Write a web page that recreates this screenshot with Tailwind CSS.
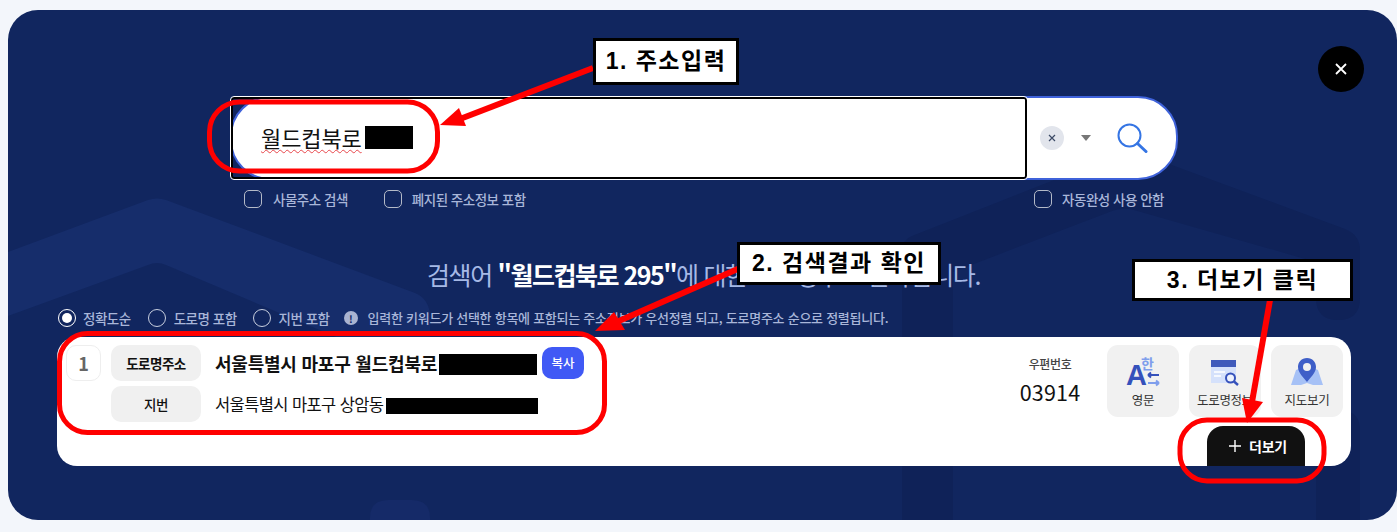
<!DOCTYPE html>
<html lang="ko">
<head>
<meta charset="utf-8">
<script src="https://cdn.jsdelivr.net/npm/@tailwindcss/browser@4"></script>
</head>
<body class="bg-[#f3f6fb] font-['Noto_Sans_CJK_KR',sans-serif]">
<div class="w-[1397px] h-[532px] pt-[10px] pl-[8px] overflow-hidden relative">
  <main class="relative w-[1389px] h-[510px] bg-[#11265f] rounded-[30px] overflow-hidden flex flex-col">
    <svg class="absolute inset-0" width="1389" height="510" viewBox="8 10 1389 510" fill="none">
      <path d="M8 252 L148 200 Q157 197 166 200 L415 293 Q430 299 430 318 V345 H355 L166 265 Q157 261 148 265 L8 316 Z" fill="#162d6b"/>
      <path d="M370 520 V518 Q370 500 388 500 H412 Q430 500 430 518 V520 Z" fill="#152a68"/>
      <path d="M902 520 V250 Q902 240 912 236 L1120 154 Q1131 150 1142 154 L1345 229 Q1360 235 1360 250 V298 Q1360 320 1338 320 Q1316 320 1316 298 V262 L1134 210 Q1123 207 1112 211 L953 272 V520 Z" fill="#0f2258"/>
      <path d="M1316 520 V430 Q1316 410 1338 410 Q1360 410 1360 430 V520 Z" fill="#0f2258"/>
    </svg>

    <button class="absolute left-[1310px] top-[36px] w-[46px] h-[46px] rounded-full bg-black flex items-center justify-center">
      <svg width="14" height="14" viewBox="0 0 14 14" stroke="#fff" stroke-width="1.8"><path d="M2 2L12 12M12 2L2 12"/></svg>
    </button>

    <section class="relative mt-[86px] ml-[222px] w-[948px] h-[84px] bg-white rounded-[40px] border-2 border-[#3f62da] flex items-center shrink-0">
      <div class="absolute -left-[1px] -top-[1px] w-[796px] h-[82px] border-2 border-black rounded-[3px] outline outline-1 outline-white flex items-center pl-[28px] pb-[2px]">
        <span class="text-[22px] leading-[30px] tracking-[-0.1px] text-[#111] underline decoration-wavy decoration-[#e8474c] decoration-1 underline-offset-2">월드컵북로</span>
        <span class="ml-[3px] w-[48px] h-[23px] bg-black"></span>
      </div>
      <div class="ml-[808px] flex items-center">
        <span class="w-[24px] h-[24px] rounded-full bg-[#e2e5ec] flex items-center justify-center">
          <svg width="8" height="8" viewBox="0 0 8 8" stroke="#3b4a66" stroke-width="1.2"><path d="M1 1L7 7M7 1L1 7"/></svg>
        </span>
        <svg class="ml-[17px]" width="10" height="6" viewBox="0 0 10 6" fill="#777"><path d="M0 0H10L5 6Z"/></svg>
        <svg class="ml-[25px]" width="32" height="32" viewBox="0 0 32 32" fill="none" stroke="#3575e4"><circle cx="13.5" cy="13.5" r="11" stroke-width="2"/><path d="M21.5 21.5L30 29.500" stroke-width="3" stroke-linecap="round"/></svg>
      </div>
    </section>

    <div class="relative mt-[9px] ml-[236px] w-[920px] flex items-center text-[13.5px] font-medium tracking-[-0.5px] text-[#a9b6d9] h-[20px] shrink-0">
      <span class="w-[18px] h-[18px] rounded-[5px] border border-[#b4bac8]"></span>
      <span class="ml-[11px]">사물주소 검색</span>
      <span class="ml-[36px] w-[18px] h-[18px] rounded-[5px] border border-[#b4bac8]"></span>
      <span class="ml-[10px]">폐지된 주소정보 포함</span>
      <span class="ml-auto w-[18px] h-[18px] rounded-[5px] border border-[#b4bac8]"></span>
      <span class="ml-[10px]">자동완성 사용 안함</span>
    </div>

    <h2 class="relative mt-[47px] pl-[2px] text-center text-[25px] leading-[36px] tracking-[-1.35px] font-normal text-[#a6b9e6] shrink-0">검색어 <b class="font-bold tracking-[-1.5px] text-white">"월드컵북로 295"</b>에 대한 도로명주소 결과입니다.</h2>

    <div class="relative mt-[16px] ml-[50px] flex items-center h-[20px] text-[13.5px] font-medium tracking-[-0.5px] text-[#a9b6d9] shrink-0">
      <span class="w-[18px] h-[18px] rounded-full border border-white flex items-center justify-center"><span class="w-[10px] h-[10px] rounded-full bg-white"></span></span>
      <span class="ml-[7px]">정확도순</span>
      <span class="ml-[17px] w-[18px] h-[18px] rounded-full border border-[#c8cfdf]"></span>
      <span class="ml-[8px]">도로명 포함</span>
      <span class="ml-[16px] w-[18px] h-[18px] rounded-full border border-[#c8cfdf]"></span>
      <span class="ml-[8px]">지번 포함</span>
      <span class="ml-[14px] w-[14px] h-[14px] rounded-full bg-[#a9b3d1] text-[#11265f] text-[10px] font-bold flex items-center justify-center">!</span>
      <span class="ml-[10px] text-[13px] tracking-[-0.26px]">입력한 키워드가 선택한 항목에 포함되는 주소정보가 우선정렬 되고, 도로명주소 순으로 정렬됩니다.</span>
    </div>

    <article class="relative mt-[9px] ml-[49px] w-[1294px] h-[129px] bg-white rounded-[20px] shrink-0 flex pt-[8px] pl-[9px] pr-[8px]">
      <span class="w-[35px] h-[36px] rounded-[10px] border border-[#eeeeee] flex items-center justify-center text-[18px] font-bold text-[#666]">1</span>
      <div class="ml-[10px] flex flex-col gap-[5px]">
        <div class="flex items-center h-[36px]">
          <span class="w-[90px] h-[36px] rounded-[10px] bg-[#f0f0f0] flex items-center justify-center text-[13.5px] font-bold tracking-[-0.5px] text-[#111]">도로명주소</span>
          <span class="ml-[14px] text-[18px] font-bold tracking-[-0.22px] text-[#111]">서울특별시 마포구 월드컵북로</span>
          <span class="mt-[2px] ml-[2px] w-[98px] h-[21px] bg-black"></span>
          <span class="ml-[5px] w-[42px] h-[32px] rounded-[10px] bg-[#4059f5] text-white text-[12.5px] font-medium flex items-center justify-center">복사</span>
        </div>
        <div class="flex items-center h-[36px]">
          <span class="w-[90px] h-[36px] rounded-[10px] bg-[#f0f0f0] flex items-center justify-center text-[13.5px] font-medium tracking-[-0.4px] text-[#111]">지번</span>
          <span class="ml-[14px] text-[16.5px] tracking-[-0.6px] text-[#111]">서울특별시 마포구 상암동</span>
          <span class="mt-[4px] ml-[3px] w-[152px] h-[16px] bg-black"></span>
        </div>
      </div>
      <div class="ml-auto flex h-[72px]">
        <div class="w-[62px] flex flex-col items-center mr-[26px] pt-[10px]">
          <span class="text-[12px] leading-[18px] font-medium tracking-[-0.4px] text-[#444]">우편번호</span>
          <span class="mt-[5px] text-[21.5px] leading-[28px] text-[#111] tracking-[0.2px]">03914</span>
        </div>
        <div class="flex gap-[10px]">
          <div class="w-[72px] h-[72px] rounded-[11px] bg-[#f1f1f1] flex flex-col items-center pt-[12px]">
            <svg class="overflow-visible" width="34" height="30" viewBox="0 0 34 30">
              <text x="15" y="12" font-size="14" font-weight="700" fill="#7f9eec" font-family="Noto Sans CJK KR">한</text>
              <text x="0" y="28" font-size="29" font-weight="700" fill="#3551bb" font-family="Liberation Sans">A</text>
              <path d="M22 18H33M22 18L25 15.500M22 18L25 20.500" stroke="#3551bb" stroke-width="2" fill="none"/>
              <path d="M22 26H33M33 26L30 23.500M33 26L30 28.500" stroke="#7f9eec" stroke-width="2" fill="none"/>
            </svg>
            <span class="mt-[5px] text-[12.5px] leading-[16px] tracking-[-0.3px] text-[#333]">영문</span>
          </div>
          <div class="w-[72px] h-[72px] rounded-[11px] bg-[#f1f1f1] flex flex-col items-center pt-[12px]">
            <svg width="30" height="30" viewBox="0 0 30 30">
              <rect x="1" y="3" width="25" height="23" fill="#d5e1fb"/>
              <rect x="1" y="3" width="25" height="7" fill="#3f5abb"/>
              <path d="M4 15H15M4 19H11" stroke="#fff" stroke-width="1.6"/>
              <circle cx="20.500" cy="21" r="4.500" fill="#eef2fd" stroke="#3551bb" stroke-width="2"/>
              <path d="M24 24.500L28 28" stroke="#3551bb" stroke-width="2.400"/>
            </svg>
            <span class="mt-[5px] text-[12.5px] leading-[16px] tracking-[-0.3px] text-[#333]">도로명정보</span>
          </div>
          <div class="w-[72px] h-[72px] rounded-[11px] bg-[#f1f1f1] flex flex-col items-center pt-[12px]">
            <svg width="34" height="30" viewBox="0 0 34 30">
              <path d="M6 13L11 11L17 13L23 11L28 13L33 28H23L17 26L11 28H1Z" fill="#a6c1f6"/>
              <path d="M17 1C11.500 1 8 5 8 10C8 16 14 21 17 25C20 21 26 16 26 10C26 5 22.500 1 17 1Z" fill="#3f5fc8"/>
              <circle cx="17" cy="10" r="4" fill="#f1f1f1"/>
            </svg>
            <span class="mt-[5px] text-[12.5px] leading-[16px] tracking-[-0.3px] text-[#333]">지도보기</span>
          </div>
        </div>
      </div>
      <button class="absolute right-[46px] bottom-0 w-[98px] h-[40px] bg-[#111] rounded-t-[16px] flex items-center justify-center pl-[4px] text-white text-[14px] font-bold tracking-[-0.2px]">
        <svg class="mr-[8px]" width="12" height="12" viewBox="0 0 12 12" stroke="#fff" stroke-width="1.4"><path d="M6 0V12M0 6H12"/></svg>더보기
      </button>
    </article>
  </main>

  <svg class="absolute left-0 top-0 pointer-events-none" width="1397" height="532" viewBox="0 0 1397 532" fill="none">
    <rect x="209.500" y="102" width="228" height="69" rx="30" stroke="#ff0000" stroke-width="5"/>
    <rect x="59.500" y="333.500" width="545" height="99" rx="28" stroke="#ff0000" stroke-width="5"/>
    <rect x="1180" y="420" width="144" height="61" rx="27" stroke="#ff0000" stroke-width="5"/>
    <path d="M593 68L460 119" stroke="#ff0000" stroke-width="6"/>
    <path d="M440 125L459 108L466 126Z" fill="#ff0000"/>
    <path d="M740 268L612 324" stroke="#ff0000" stroke-width="6"/>
    <path d="M595 331L614 312L625 330Z" fill="#ff0000"/>
    <path d="M1270 300L1252 402" stroke="#ff0000" stroke-width="6"/>
    <path d="M1247 423L1242 398L1263 402Z" fill="#ff0000"/>
  </svg>
  <div class="absolute left-[593px] top-[38px] w-[146px] h-[47px] border-[3px] border-black bg-white flex items-center justify-center text-[23px] leading-none font-bold tracking-[1.5px] text-black font-['Liberation_Sans','Noto_Sans_CJK_KR',sans-serif]">1. 주소입력</div>
  <div class="absolute left-[737px] top-[242px] w-[204px] h-[43px] border-[3px] border-black bg-white flex items-center justify-center text-[23px] leading-none font-bold tracking-[1.5px] text-black font-['Liberation_Sans','Noto_Sans_CJK_KR',sans-serif]">2. 검색결과 확인</div>
  <div class="absolute left-[1132px] top-[259px] w-[221px] h-[42px] border-[3px] border-black bg-white flex items-center justify-center text-[23px] leading-none font-bold tracking-[1.5px] text-black font-['Liberation_Sans','Noto_Sans_CJK_KR',sans-serif]">3. 더보기 클릭</div>
</div>
</body>
</html>
